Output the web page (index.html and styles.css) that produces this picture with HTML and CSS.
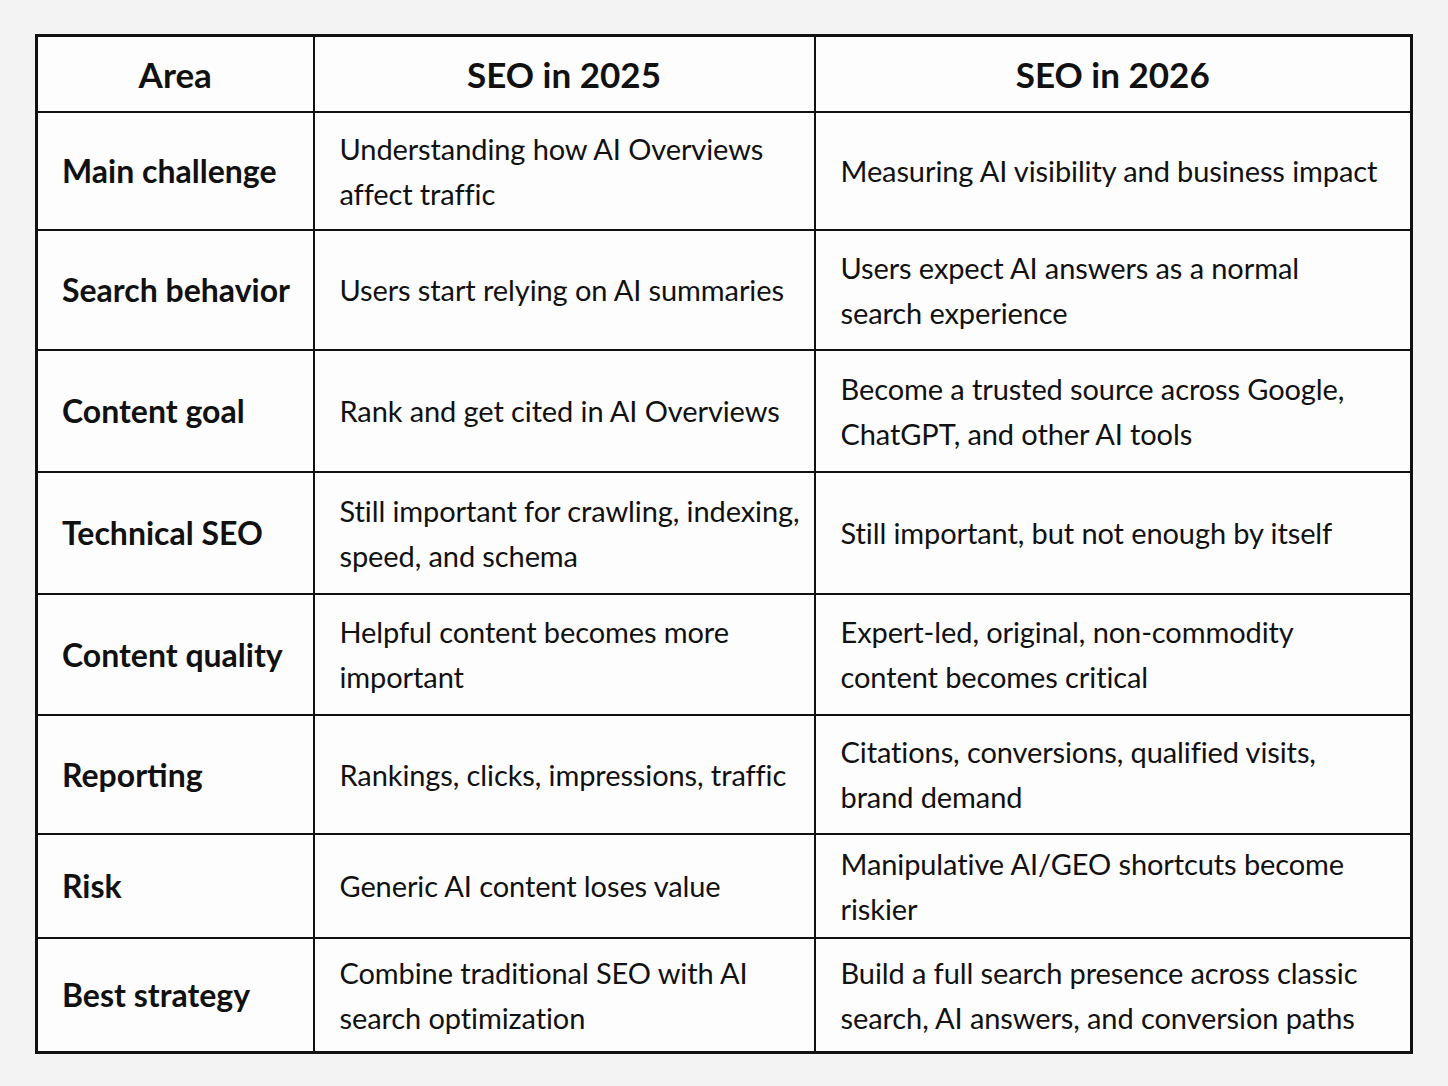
FILE: index.html
```html
<!DOCTYPE html>
<html lang="en">
<head>
<meta charset="utf-8">
<title>SEO 2025 vs 2026</title>
<link rel="stylesheet" href="styles.css">
</head>
<body>
<main class="page">
  <table class="cmp">
    <colgroup>
      <col class="c-area">
      <col class="c-2025">
      <col class="c-2026">
    </colgroup>
    <thead>
      <tr class="row-head">
        <th>Area</th>
        <th>SEO in 2025</th>
        <th>SEO in 2026</th>
      </tr>
    </thead>
    <tbody>
      <tr class="row-a">
        <td class="label">Main challenge</td>
        <td class="y25">Understanding how AI Overviews affect traffic</td>
        <td>Measuring AI visibility and business impact</td>
      </tr>
      <tr class="row-b">
        <td class="label">Search behavior</td>
        <td class="y25">Users start relying on AI summaries</td>
        <td>Users expect AI answers as a normal search experience</td>
      </tr>
      <tr class="row-c">
        <td class="label">Content goal</td>
        <td class="y25">Rank and get cited in AI Overviews</td>
        <td>Become a trusted source across Google, ChatGPT, and other AI tools</td>
      </tr>
      <tr class="row-c">
        <td class="label">Technical SEO</td>
        <td class="y25">Still important for crawling, indexing, speed, and schema</td>
        <td>Still important, but not enough by itself</td>
      </tr>
      <tr class="row-g">
        <td class="label">Content quality</td>
        <td class="y25">Helpful content becomes more important</td>
        <td>Expert-led, original, non-commodity content becomes critical</td>
      </tr>
      <tr class="row-f">
        <td class="label">Reporting</td>
        <td class="y25">Rankings, clicks, impressions, traffic</td>
        <td>Citations, conversions, qualified visits, brand demand</td>
      </tr>
      <tr class="row-d">
        <td class="label">Risk</td>
        <td class="y25">Generic AI content loses value</td>
        <td>Manipulative AI/GEO shortcuts become riskier</td>
      </tr>
      <tr class="row-e">
        <td class="label">Best strategy</td>
        <td class="y25">Combine traditional SEO with AI search optimization</td>
        <td>Build a full search presence across classic search, AI answers, and conversion paths</td>
      </tr>
    </tbody>
  </table>
</main>
</body>
</html>
```
FILE: styles.css
```css
html, body {
  margin: 0;
  padding: 0;
  background: #f3f3f3;
}
body {
  font-family: Lato, "Liberation Sans", sans-serif;
  color: #111;
}
.page {
  padding: 34px 0 0 35px;
}
.cmp {
  border-collapse: collapse;
  table-layout: fixed;
  width: 1375px;
  border: 3px solid #111;
  background: #fdfdfd;
}
.c-area { width: 277px; }
.c-2025 { width: 501px; }
.c-2026 { width: 597px; }
.cmp th,
.cmp td {
  border: 2px solid #111;
  vertical-align: middle;
}
.cmp th {
  font-size: 35px;
  font-weight: 700;
  text-align: center;
  letter-spacing: 0;
}
.cmp td {
  font-size: 29px;
  line-height: 45px;
  letter-spacing: -0.1px;
  padding: 0 26px 0 25px;
  text-align: left;
}
.cmp td.y25 {
  padding-right: 8px;
}
.cmp td.label {
  font-size: 32px;
  font-weight: 700;
  letter-spacing: 0;
  padding: 0 4px 0 24px;
  white-space: nowrap;
}
.row-head { height: 76px; }
.row-a { height: 118px; }
.row-b { height: 120px; }
.row-c { height: 122px; }
.row-g { height: 121px; }
.row-f { height: 119px; }
.row-d { height: 104px; }
.row-e { height: 115px; }
```
